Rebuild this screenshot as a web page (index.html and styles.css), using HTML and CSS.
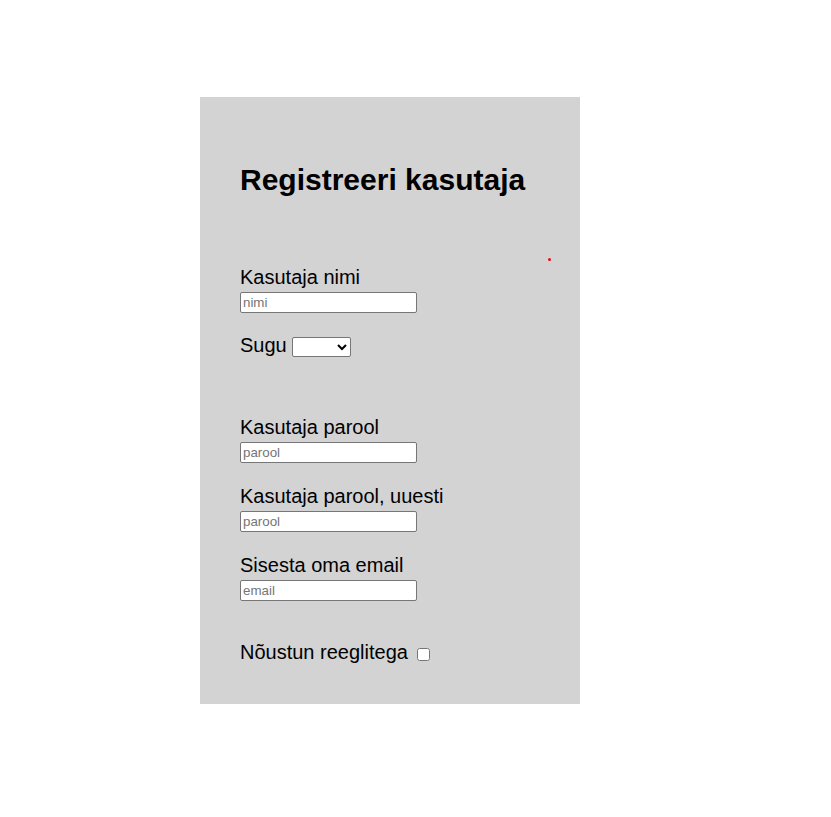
FILE: index.html
```html
<!DOCTYPE html>
<html lang="et">
<head>
<meta charset="utf-8">
<title>Registreeri kasutaja</title>
<link rel="stylesheet" href="styles.css">
</head>
<body>
<div class="card">
  <h1 class="title">Registreeri kasutaja</h1>
  <span class="error-dot"></span>
  <form class="form">
    <div class="field">
      <label class="label" for="nimi">Kasutaja nimi</label>
      <input class="input" id="nimi" type="text" placeholder="nimi">
    </div>
    <div class="row gender">
      <label class="label" for="sugu">Sugu</label>
      <select class="select" id="sugu">
        <option></option>
        <option>Mees</option>
        <option>Naine</option>
      </select>
    </div>
    <div class="field">
      <label class="label" for="parool">Kasutaja parool</label>
      <input class="input" id="parool" type="password" placeholder="parool">
    </div>
    <div class="field">
      <label class="label" for="parool2">Kasutaja parool, uuesti</label>
      <input class="input" id="parool2" type="password" placeholder="parool">
    </div>
    <div class="field">
      <label class="label" for="email">Sisesta oma email</label>
      <input class="input" id="email" type="email" placeholder="email">
    </div>
    <div class="row agree">
      <label class="label" for="rules">Nõustun reeglitega</label>
      <input class="check" id="rules" type="checkbox">
    </div>
  </form>
</div>
</body>
</html>
```
FILE: styles.css
```css
html, body {
  margin: 0;
  padding: 0;
  background: #ffffff;
}
body {
  font-family: "Liberation Sans", Arial, sans-serif;
  color: #000;
}
.card {
  position: relative;
  box-sizing: border-box;
  width: 380px;
  margin: 97px 0 0 200px;
  padding: 66px 40px 40px 40px;
  background: #d3d3d3;
}
.title {
  margin: 0;
  font-size: 30px;
  font-weight: bold;
  line-height: 34px;
}
.error-dot {
  position: absolute;
  left: 348px;
  top: 161px;
  width: 3px;
  height: 3px;
  border-radius: 50%;
  background: #f00;
}
.form {
  display: flex;
  flex-direction: column;
  margin-top: 69px;
}
.field {
  display: flex;
  flex-direction: column;
  align-items: flex-start;
  margin-bottom: 22px;
}
.label {
  font-size: 20px;
  line-height: 23px;
}
.input {
  box-sizing: border-box;
  width: 177px;
  height: 21px;
  margin: 3px 0 0 0;
  padding: 1px 2px;
  border: 1px solid #767676;
  border-radius: 2px;
  background: #fff;
  font-family: "Liberation Sans", Arial, sans-serif;
  font-size: 13.33px;
  color: #000;
}
.input::placeholder {
  color: #757575;
}
.row {
  display: flex;
  align-items: center;
}
.gender {
  margin-bottom: 59px;
  margin-top: -1px;
}
.select {
  box-sizing: border-box;
  width: 59px;
  height: 20px;
  margin: 2px 0 0 5px;
  font-family: "Liberation Sans", Arial, sans-serif;
  font-size: 13.33px;
  border: 1px solid #767676;
  border-radius: 2px;
  background: #fff;
}
.agree {
  margin-top: 18px;
}
.check {
  width: 13px;
  height: 13px;
  margin: 3px 3px 0 9px;
}
```
